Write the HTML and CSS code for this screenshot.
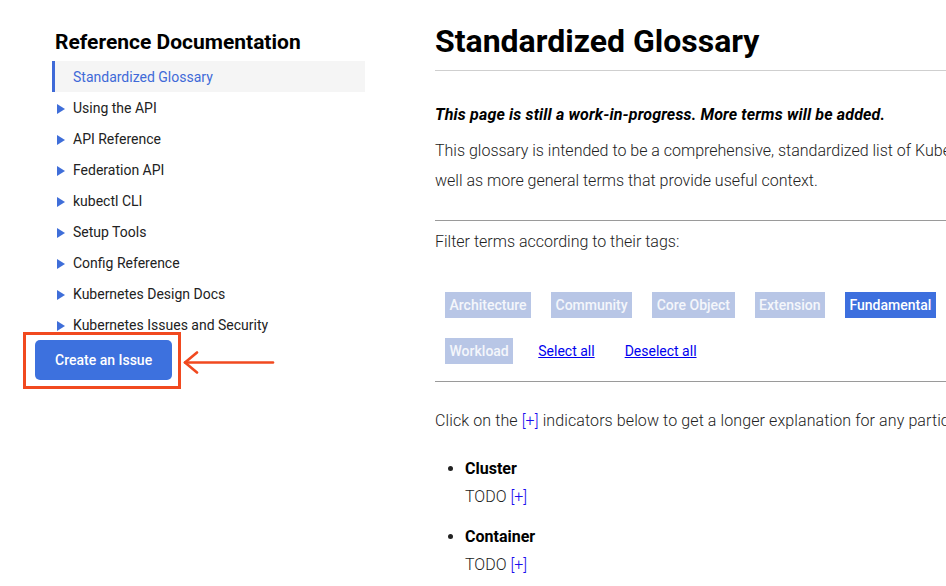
FILE: index.html
```html
<!DOCTYPE html>
<html lang="en">
<head>
<meta charset="utf-8">
<title>Standardized Glossary</title>
<link rel="stylesheet" href="styles.css">
</head>
<body>
<div class="page">
  <aside class="sidebar">
    <h2 class="side-title">Reference Documentation</h2>
    <ul class="nav">
      <li class="nav-item active">Standardized Glossary</li>
      <li class="nav-item folder">Using the API</li>
      <li class="nav-item folder">API Reference</li>
      <li class="nav-item folder">Federation API</li>
      <li class="nav-item folder">kubectl CLI</li>
      <li class="nav-item folder">Setup Tools</li>
      <li class="nav-item folder">Config Reference</li>
      <li class="nav-item folder">Kubernetes Design Docs</li>
      <li class="nav-item folder">Kubernetes Issues and Security</li>
    </ul>
    <div class="issue-wrap">
      <a class="issue-btn" href="#">Create an Issue</a>
      <svg class="callout-arrow" width="94" height="24" viewBox="0 0 94 24" aria-hidden="true">
        <polyline points="15,1.5 3,11.5 15,21.5" fill="none" stroke="#f1491f" stroke-width="2.6" stroke-linecap="round" stroke-linejoin="round"/>
        <line x1="3" y1="11.5" x2="91" y2="11.5" stroke="#f1491f" stroke-width="2.6" stroke-linecap="round"/>
      </svg>
    </div>
  </aside>
  <main class="content">
    <h1 class="title">Standardized Glossary</h1>
    <hr class="rule-light">
    <p class="wip"><em>This page is still a work-in-progress. More terms will be added.</em></p>
    <p class="intro">This glossary is intended to be a comprehensive, standardized list of Kubernetes terminology. It includes technical terms that are specific to K8s, as<br>well as more general terms that provide useful context.</p>
    <hr class="rule">
    <p class="filter-label">Filter terms according to their tags:</p>
    <div class="tags">
      <span class="tag">Architecture</span>
      <span class="tag">Community</span>
      <span class="tag">Core Object</span>
      <span class="tag">Extension</span>
      <span class="tag on">Fundamental</span>
      <span class="tag">Workload</span>
      <a class="tag-link" href="#">Select all</a>
      <a class="tag-link" href="#">Deselect all</a>
    </div>
    <hr class="rule rule-tags">
    <p class="hint">Click on the <a class="plus" href="#">[+]</a> indicators below to get a longer explanation for any particular term.</p>
    <ul class="terms">
      <li class="term">
        <strong class="term-name">Cluster</strong>
        <div class="term-def">TODO <a class="plus" href="#">[+]</a></div>
      </li>
      <li class="term">
        <strong class="term-name">Container</strong>
        <div class="term-def">TODO <a class="plus" href="#">[+]</a></div>
      </li>
      <li class="term">
        <strong class="term-name">Controller</strong>
        <div class="term-def">TODO <a class="plus" href="#">[+]</a></div>
      </li>
    </ul>
  </main>
</div>
</body>
</html>
```
FILE: styles.css
```css
html, body {
  margin: 0;
  padding: 0;
  overflow: hidden;
  background: #fff;
}

body {
  font-family: Roboto, "Liberation Sans", sans-serif;
  color: #222;
}

.page {
  display: flex;
  align-items: flex-start;
  padding-left: 35px;
  width: 1600px;
}

/* ---------- Sidebar ---------- */
.sidebar {
  width: 330px;
  flex-shrink: 0;
  padding-top: 30px;
}

.side-title {
  margin: 0 0 7px 20px;
  font-size: 21px;
  line-height: 24px;
  font-weight: 700;
  color: #000;
}

.nav {
  list-style: none;
  margin: 0 0 0 17px;
  padding: 0;
  width: 313px;
}

.nav-item {
  position: relative;
  height: 31px;
  line-height: 33px;
  padding-left: 21px;
  font-size: 14px;
  color: #222;
}

.nav-item.active {
  background: #f5f5f5;
  border-left: 3px solid #3f6ad8;
  padding-left: 18px;
  color: #3f6ad8;
}

.nav-item.folder::before {
  content: "";
  position: absolute;
  left: 5px;
  top: 12px;
  width: 0;
  height: 0;
  border-left: 8px solid #3f6ed9;
  border-top: 5px solid transparent;
  border-bottom: 5px solid transparent;
}

.issue-wrap {
  position: relative;
  display: inline-block;
}

.issue-wrap::after {
  content: "";
  position: absolute;
  top: -8px;
  left: -12px;
  right: -9px;
  bottom: -9px;
  border: 3px solid #f1491f;
  pointer-events: none;
}

.issue-btn {
  display: block;
  height: 40px;
  line-height: 40px;
  padding: 0 20px;
  background: #3d71de;
  color: #fff;
  border-radius: 5px;
  font-size: 14px;
  font-weight: 500;
  text-decoration: none;
}

.callout-arrow {
  position: absolute;
  left: 147px;
  top: 11px;
}

/* ---------- Main content ---------- */
.content {
  margin-left: 70px;
  width: 1100px;
  flex-shrink: 0;
  padding-top: 21px;
}

.title {
  margin: 0;
  font-size: 32px;
  line-height: 40px;
  font-weight: 700;
  color: #000;
}

.rule-light {
  margin: 9px 0 0;
  border: 0;
  border-top: 1px solid #cfcfcf;
  height: 0;
}

.rule {
  margin: 24px 0 0;
  border: 0;
  border-top: 1px solid #9a9a9a;
  height: 0;
}

.wip,
.intro,
.filter-label,
.hint {
  font-size: 16px;
  line-height: 30px;
  font-weight: 300;
}

.wip {
  margin: 29px 0 0;
}

.wip em {
  font-weight: 700;
  font-style: italic;
  color: #000;
  letter-spacing: 0.15px;
}

.intro {
  margin: 6px 0 0;
}

.filter-label {
  margin: 6px 0 0;
}

.tags {
  display: flex;
  flex-wrap: wrap;
  align-items: center;
  width: 540px;
  margin-top: 25px;
}

.tag {
  margin: 10px;
  height: 26px;
  line-height: 26px;
  padding: 0 4.5px;
  font-size: 14px;
  font-weight: 500;
  color: #f4f6fb;
  background: #b8c6e6;
}

.tag.on {
  background: #3d6fde;
  color: #fff;
}

.tag-link {
  margin: 0 15px;
  font-size: 14px;
  color: #0000ee;
  text-decoration: underline;
}

.rule-tags {
  margin-top: 7px;
}

.hint {
  margin: 24px 0 0;
  letter-spacing: 0.1px;
}

.plus {
  color: #1a0dee;
  text-decoration: none;
}

.terms {
  margin: 19px 0 0;
  padding-left: 30px;
  font-size: 16px;
  line-height: 28px;
}

.term {
  margin-bottom: 12px;
}

.term-name {
  display: block;
  font-weight: 700;
  color: #000;
}

.term-def {
  font-weight: 300;
}
```
